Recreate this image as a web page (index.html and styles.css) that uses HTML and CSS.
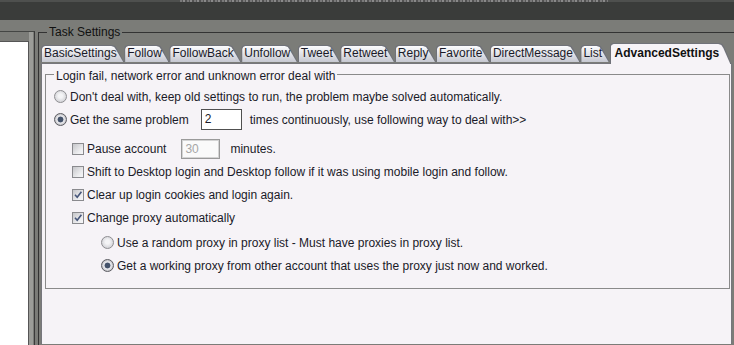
FILE: index.html
```html
<!DOCTYPE html>
<html>
<head>
<meta charset="utf-8">
<title>Task Settings</title>
<link rel="stylesheet" href="styles.css">
</head>
<body>
<div class="titlebar"><div class="titlenoise"></div></div>
<div class="main">
  <div class="leftframe"><div class="leftlist"></div></div>
  <fieldset class="taskframe">
    <legend class="tasklegend">Task Settings</legend>
    <div class="tabpanel">
      <div class="tabs">
        <div class="tab">BasicSettings</div>
        <div class="tab">Follow</div>
        <div class="tab">FollowBack</div>
        <div class="tab">Unfollow</div>
        <div class="tab">Tweet</div>
        <div class="tab">Retweet</div>
        <div class="tab">Reply</div>
        <div class="tab">Favorite</div>
        <div class="tab">DirectMessage</div>
        <div class="tab">List</div>
        <div class="tab selected">AdvancedSettings</div>
      </div>
      <div class="content">
        <fieldset class="group">
          <legend class="grouplegend">Login fail, network error and unknown error deal with</legend>
          <div class="row l1"><span class="radio"></span><span>Don't deal with, keep old settings to run, the problem maybe solved automatically.</span></div>
          <div class="row l1"><span class="radio on"></span><span>Get the same problem</span><span class="field times">2</span><span class="after-times">times continuously, use following way to deal with&gt;&gt;</span></div>
          <div class="row l2 pause"><span class="check"></span><span>Pause account</span><span class="field disabled minutes">30</span><span class="after-minutes">minutes.</span></div>
          <div class="row l2"><span class="check"></span><span>Shift to Desktop login and Desktop follow if it was using mobile login and follow.</span></div>
          <div class="row l2"><span class="check"><svg width="10" height="10" viewBox="0 0 10 10"><path d="M2 4.8 L4.2 7.2 L8.4 1.8" fill="none" stroke="#46557a" stroke-width="1.6"/></svg></span><span>Clear up login cookies and login again.</span></div>
          <div class="row l2"><span class="check"><svg width="10" height="10" viewBox="0 0 10 10"><path d="M2 4.8 L4.2 7.2 L8.4 1.8" fill="none" stroke="#46557a" stroke-width="1.6"/></svg></span><span>Change proxy automatically</span></div>
          <div class="row l3 sub"><span class="radio"></span><span>Use a random proxy in proxy list - Must have proxies in proxy list.</span></div>
          <div class="row l3"><span class="radio on"></span><span>Get a working proxy from other account that uses the proxy just now and worked.</span></div>
        </fieldset>
      </div>
    </div>
  </fieldset>
</div>
</body>
</html>
```
FILE: styles.css
```css
html, body {
  margin: 0;
  padding: 0;
}
body {
  width: 734px;
  height: 345px;
  overflow: hidden;
  background: #7b7c78;
  font-family: "Liberation Sans", Arial, sans-serif;
  font-size: 12px;
  color: #1a1a28;
}
.titlebar {
  height: 20px;
  background: linear-gradient(#4e504e 0 2px, #3a3c3a 2px);
}
.titlenoise {
  margin-left: 180px;
  width: 428px;
  height: 2px;
  background: repeating-linear-gradient(90deg, #7a7a7a 0 2px, #585858 2px 3px, #8a8a8a 3px 5px, #525252 5px 7px);
}
.main {
  display: flex;
  align-items: flex-start;
  height: 325px;
  overflow: hidden;
}
.leftframe {
  flex: none;
  margin-top: 11px;
  width: 34px;
  height: 313px;
  border-top: 1px solid #444644;
  border-right: 1px solid #3a3a3a;
  background: linear-gradient(90deg, #7b7c78 0 29px, #9c9d99 29px 33px, #7b7c78 33px);
}
.leftlist {
  margin-top: 9px;
  width: 28px;
  height: 303px;
  background: #ffffff;
  border-top: 1px solid #555;
  border-right: 1px solid #555;
}
.taskframe {
  flex: 1;
  min-width: 0;
  margin: 6px 0 0 3px;
  padding: 0 0 0 2px;
  border: none;
  border-left: 1px solid #333;
  border-top: 1px solid #333;
  height: 319px;
  box-sizing: border-box;
}
.tasklegend {
  padding: 0 2px;
  margin-left: 6px;
  line-height: 12px;
  font-size: 12px;
  color: #111;
}
.tabpanel {
  margin-top: 5px;
  width: 691px;
}
.tabs {
  display: flex;
  align-items: flex-start;
  height: 20px;
  position: relative;
  z-index: 1;
}
.tab {
  position: relative;
  z-index: 0;
  flex: none;
  height: 17px;
  margin-top: 2px;
  padding: 0 7.5px 0 3px;
  line-height: 17px;
  color: #1a1a28;
  background: #707279;
  clip-path: polygon(0 100%, 0 3px, 1px 1px, 3px 0, calc(100% - 12px) 0, calc(100% - 9px) 1px, calc(100% - 7px) 4px, 100% 100%);
}
.tab::before {
  content: "";
  position: absolute;
  z-index: -1;
  inset: 1px 1px 0 1px;
  background: linear-gradient(#fbfbfd, #e4e5ea 45%, #c6c8d1);
  clip-path: polygon(0 100%, 0 3px, 1px 1px, 3px 0, calc(100% - 12px) 0, calc(100% - 9px) 1px, calc(100% - 7px) 4px, 100% 100%);
}
.tab.selected {
  height: 21px;
  margin-top: 0;
  padding: 2px 12px 0 5px;
  box-sizing: border-box;
  line-height: 17px;
  font-weight: bold;
  color: #111;
}
.tab.selected::before {
  background: #f6f3f7;
}
.content {
  border: 1px solid #76767c;
  border-bottom: none;
  background: #f6f3f7;
  height: 281px;
  box-sizing: border-box;
}
.group {
  margin: 1px 1px 0 3px;
  padding: 2px 0 11px 0;
  border: 1px solid #8a8a8a;
  min-width: 0;
}
.grouplegend {
  margin-left: 8px;
  padding: 4px 2px 0 2px;
  line-height: 14px;
  color: #1a1a28;
}
.row {
  display: flex;
  align-items: center;
  height: 23px;
  white-space: nowrap;
}
.l1 { padding-left: 8px; }
.l2 { padding-left: 26px; }
.l3 { padding-left: 55px; }
.pause { margin-top: 6px; }
.sub { margin-top: 2px; }
.radio {
  flex: none;
  box-sizing: border-box;
  width: 13px;
  height: 13px;
  margin-right: 3px;
  border-radius: 50%;
  border: 1px solid #8e8e92;
  background: radial-gradient(circle at 50% 45%, #f4f4f6 0 2px, #dcdce0 5px, #c4c4c8);
}
.radio.on {
  border-color: #5c5c62;
  background: radial-gradient(circle, #44526a 0 2.6px, #eeeef2 3.3px, #d6d6da 4.6px, #b8b8bc 6px);
}
.check {
  flex: none;
  box-sizing: border-box;
  width: 12px;
  height: 12px;
  margin-right: 3px;
  border: 1px solid #8a8a8e;
  background: linear-gradient(135deg, #c6c6ca, #eeeef0 70%, #f6f6f8);
  display: flex;
  align-items: center;
  justify-content: center;
}
.field {
  flex: none;
  box-sizing: border-box;
  background: #ffffff;
  border: 1px solid #505050;
  padding-left: 3px;
  line-height: 18px;
}
.times {
  width: 41px;
  height: 21px;
  margin-left: 12px;
  line-height: 19px;
}
.after-times { margin-left: 8px; }
.disabled {
  color: #a6a6a6;
  border-color: #9a9a9a;
  box-shadow: inset 0 0 0 1px #d4d4d4;
  background: #fafafa;
}
.minutes {
  width: 39px;
  height: 20px;
  margin-left: 15px;
}
.after-minutes { margin-left: 10px; }
```
